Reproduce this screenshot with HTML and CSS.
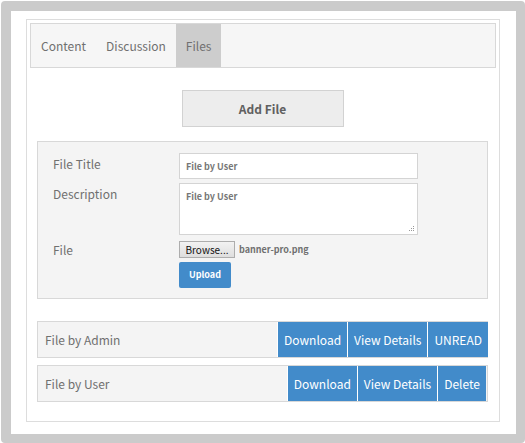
FILE: index.html
```html
<!DOCTYPE html>
<html lang="en">
<head>
<meta charset="utf-8">
<meta name="viewport" content="width=device-width, initial-scale=1">
<title>Files</title>
<link rel="stylesheet" href="styles.css">
</head>
<body>
<div class="frame">
  <main class="panel">
    <nav class="tabs">
      <a class="tab" href="#content">Content</a>
      <a class="tab" href="#discussion">Discussion</a>
      <a class="tab tab-active" href="#files" aria-current="page">Files</a>
    </nav>
    <div class="body">
      <button class="add" type="button">Add File</button>
      <form class="form">
        <label class="label" for="title">File Title</label>
        <input class="field" id="title" type="text" value="File by User">
        <label class="label" for="description">Description</label>
        <div class="area">
          <textarea class="field field-area" id="description">File by User</textarea>
          <svg class="grip" viewBox="0 0 6 6" aria-hidden="true"><path d="M4 0h1v1h-1zM2 2h1v1h-1zM4 2h1v1h-1zM0 4h1v1h-1zM2 4h1v1h-1zM4 4h1v1h-1z"/></svg>
        </div>
        <span class="label">File</span>
        <div class="upload">
          <div class="picker">
            <input class="file" id="file" type="file">
            <label class="browse" for="file">Browse...</label>
            <span class="filename">banner-pro.png</span>
          </div>
          <button class="submit" type="button">Upload</button>
        </div>
      </form>
      <ul class="files">
        <li class="row">
          <span class="name">File by Admin</span>
          <button class="action" type="button">Download</button>
          <button class="action" type="button">View Details</button>
          <button class="action" type="button">UNREAD</button>
        </li>
        <li class="row row-own">
          <span class="name">File by User</span>
          <button class="action" type="button">Download</button>
          <button class="action" type="button">View Details</button>
          <button class="action" type="button">Delete</button>
        </li>
      </ul>
    </div>
  </main>
</div>
</body>
</html>
```
FILE: styles.css
```css
* { box-sizing: border-box; }

body {
  margin: 0;
  padding: 1px 0 0 1px;
  background: #fff;
  color: #707070;
  font: 12px/20px "Noto Sans CJK SC", "Noto Sans", sans-serif;
}

button, input, textarea { font: inherit; }

.frame {
  padding: 8px 16px 12px 15px;
  border: solid #cbcbcb;
  border-width: 10px 9px 9px 10px;
  border-radius: 4px;
}

.panel {
  padding: 3px;
  border: 1px solid #ddd;
}

.tabs {
  display: flex;
  border: 1px solid #d8d8d8;
  background: #f6f6f6;
}

.tab {
  padding: 12px 10px;
  color: inherit;
  line-height: 19px;
  text-decoration: none;
}

.tab-active { background: #cdcdcd; }

.body { padding: 22px 8px 16px 7px; }

.add {
  display: block;
  width: 162px;
  height: 37px;
  margin: 0 auto 14px;
  padding: 0;
  border: 1px solid #d2d2d2;
  background: #ededed;
  color: #606060;
  font-weight: bold;
}

.form {
  display: grid;
  grid-template-columns: 126px minmax(0, 239px);
  row-gap: 4px;
  padding: 11px 15px 10px;
  border: 1px solid #d8d8d8;
  background: #f4f4f4;
}

.label { padding-top: 1px; }

.field {
  display: block;
  width: 100%;
  height: 26px;
  padding: 3px 6px;
  border: 1px solid #d4d4d4;
  background: #fff;
  color: #777;
  font-size: 9px;
  font-weight: bold;
  line-height: 18px;
}

.area { position: relative; }

.field-area {
  height: 52px;
  padding: 4px 6px;
  resize: none;
}

.grip {
  position: absolute;
  right: 3px;
  bottom: 3px;
  width: 6px;
  height: 6px;
  fill: #999;
}

.upload { padding-top: 2px; }

.picker {
  display: flex;
  align-items: center;
  gap: 4px;
  margin-bottom: 4px;
}

.file {
  position: absolute;
  width: 1px;
  height: 1px;
  opacity: 0;
}

.browse {
  width: 56px;
  border: 1px solid #adadad;
  background: linear-gradient(#f2f2f2, #dedede);
  color: #111;
  font-size: 10px;
  line-height: 15px;
  text-align: center;
}

.filename {
  font-size: 9px;
  font-weight: bold;
  line-height: 17px;
}

.submit {
  height: 26px;
  padding: 0 10px;
  border: 0;
  border-radius: 2px;
  background: #428bca;
  color: #fff;
  font-size: 9px;
  font-weight: bold;
}

.files {
  display: grid;
  gap: 7px;
  margin: 22px 0 0;
  padding: 0;
  list-style: none;
}

.row {
  display: flex;
  gap: 1px;
  height: 37px;
  border: 1px solid #d8d8d8;
  border-right-width: 0;
  background: #f4f4f4;
}

.row-own {
  padding-right: 1px;
  border-right-width: 1px;
}

.name {
  flex: 1;
  padding: 8px 7px;
}

.action {
  padding: 0 6px;
  border: 0;
  background: #428bca;
  box-shadow: -1px 0 #fff;
  color: #fff;
}
```
